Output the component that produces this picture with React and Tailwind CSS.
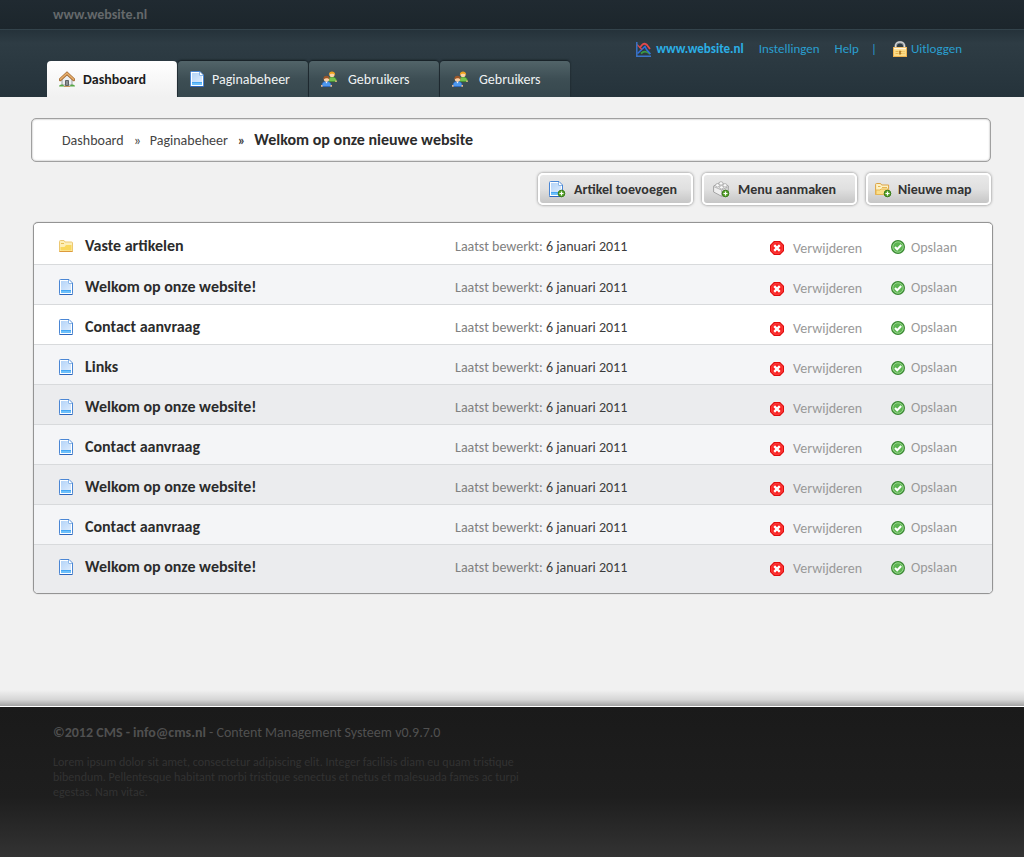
import React from "react";

const HouseIcon = () => (
    <svg className="h-4 w-4 shrink-0" viewBox="0 0 16 16" aria-hidden="true">
        <path d="M3 8v6h10V8L8 3.5z" fill="#eceff1" stroke="#9aa0a4" />
        <path d="M6.5 14.5V9.5h3v5z" fill="#8c8f93" stroke="#5d6266" />
        <path d="M1.3 8.6 8 2.4l6.7 6.2" fill="none" stroke="#a8713a" strokeWidth="3.2" strokeLinecap="round" />
        <path d="M1.5 8.2 8 2.2l6.5 6" fill="none" stroke="#e9b06d" strokeWidth="1.5" strokeLinecap="round" />
        <path d="M0 15.5c0-2.5 4.5-3 5.5 0zM10.5 15.5c1-3 5.5-2.5 5.5 0z" fill="#57a845" />
        <path d="M5 15.5h6" stroke="#c79a5c" />
    </svg>
);

const PlusBadge = () => (
    <g>
        <circle cx="12.5" cy="12.5" r="3.3" fill="#5aa52c" stroke="#357a18" />
        <path d="M12.5 10.5v4M10.5 12.5h4" stroke="#fff" strokeWidth="1.2" />
    </g>
);

const PageIcon = ({ plus }) => (
    <svg className={plus ? "h-[17px] w-[17px] shrink-0" : "h-4 w-[14px] shrink-0"} viewBox={plus ? "0 0 17 17" : "0 0 14 16"} aria-hidden="true">
        <defs>
            <linearGradient id="pageFill" x1="0" y1="0" x2="1" y2="1">
                <stop offset="0" stopColor="#b4d4f8" />
                <stop offset="1" stopColor="#dcebfd" />
            </linearGradient>
        </defs>
        <path d="M1.5.5H10L13.500 4v10.500a1 1 0 0 1-1 1h-11a1 1 0 0 1-1-1v-13a1 1 0 0 1 1-1z" fill="#fff" stroke="#4a86d4" />
        <path d="M2 2h7v3h3v6H2z" fill="url(#pageFill)" />
        <path d="M2 11h10v3H2z" fill="#6cc0fb" />
        <path d="M2 11h10v1H2z" fill="#45a6f2" />
        <path d="M9.5 1v3.500H13" fill="#fff" stroke="#8db8ea" />
        <path d="M.5 15.500h13" stroke="#2d66bd" />
        {plus && <PlusBadge />}
    </svg>
);

const UsersIcon = () => (
    <svg className="h-4 w-[19px] shrink-0" viewBox="0 0 19 16" aria-hidden="true">
        <path d="M7 10.500c0-3.500 1.500-4.500 4-4.500s4.500 1 4.500 4.500z" fill="#74c24d" stroke="#3f8f2c" strokeWidth=".7" />
        <path d="M15 9.500v1.500" stroke="#f0b98a" strokeWidth="1.5" />
        <circle cx="11" cy="3.5" r="2.6" fill="#fbd3a8" />
        <path d="M7.9 4C7.600-.8 14.400-.8 14.100 4 13 2.300 9.500 2.300 7.900 4z" fill="#f0a21c" />
        <path d="M.8 15.500c0-4 1.700-5 4.700-5s4.700 1 4.700 5z" fill="#4e98ee" stroke="#2a66c4" strokeWidth=".7" />
        <path d="M4.500 10.500h2l-1 2z" fill="#fff" />
        <path d="M.8 14v1.700M10.200 14v1.700" stroke="#f0b98a" strokeWidth="1.5" />
        <circle cx="5.5" cy="8" r="2.7" fill="#fbcfa6" />
        <path d="M2.300 8.700C1.800 3.500 9.200 3.500 8.700 8.700 7.500 6.700 4 6.700 2.300 8.700z" fill="#9b5527" />
    </svg>
);

const ChartIcon = () => (
    <svg className="h-[15px] w-[15px] shrink-0" viewBox="0 0 15 15" aria-hidden="true">
        <path d="M3.500 6 6 3C7.500 1.200 9.500 1.500 11 3l3 4" fill="none" stroke="#e3484a" strokeWidth="1.8" />
        <path d="M5 11.500c2.500-2.500 5.500-2.500 9 .5" fill="none" stroke="#3b9a45" strokeWidth="1.800" />
        <path d="M1.500 11.500 9 4.500l1.500 3L14.500 12" fill="none" stroke="#2f6fe0" strokeWidth="1.5" />
        <path d="M1 2.500 6 7.500" stroke="#d9484a" strokeWidth="1.3" />
        <path d="M.8 0v14.200H15" fill="none" stroke="#3a74c8" strokeWidth="1.5" />
    </svg>
);

const LockIcon = () => (
    <svg className="h-4 w-[14px] shrink-0" viewBox="0 0 14 16" aria-hidden="true">
        <path d="M2.700 8V5a4.300 3.800 0 0 1 8.600 0v3" fill="none" stroke="#8e9498" strokeWidth="2.6" />
        <path d="M2.500 8V5a4.500 4 0 0 1 9 0v3" fill="none" stroke="#d9dcde" strokeWidth="1.1" />
        <rect x=".5" y="6.5" width="13" height="9" fill="#fbdc88" stroke="#f0b34e" />
        <path d="M1 7.500h12" stroke="#fff6dc" strokeWidth="1.5" />
        <path d="M2.500 10.500h9M2.500 12.500h9" stroke="#e8b64e" strokeDasharray="3 1" />
        <path d="M7 9.800v3.700" stroke="#a06a1c" strokeWidth="1.5" />
    </svg>
);

const BrickIcon = () => (
    <svg className="h-[17px] w-[17px] shrink-0" viewBox="0 0 17 17" aria-hidden="true">
        <path d="M.6 5 7 1.500 15.500 5v7L9 15.500.6 11z" fill="#efefef" stroke="#a3a3a3" />
        <path d="M8.800 9.300v5.700l6.500-3.500V6z" fill="#cfcfcf" />
        <path d="M.6 5.500 8.500 9l7-3.500M8.500 9v6" fill="none" stroke="#b5b5b5" />
        <g fill="#f9f9f9" stroke="#a8a8a8" strokeWidth=".8">
            <ellipse cx="4.5" cy="4.3" rx="2" ry="1.7" />
            <ellipse cx="8" cy="2.4" rx="2" ry="1.7" />
            <ellipse cx="8.500" cy="6.300" rx="2" ry="1.7" />
            <ellipse cx="12" cy="4.300" rx="2" ry="1.7" />
        </g>
        <PlusBadge />
    </svg>
);

const FolderAddIcon = () => (
    <svg className="h-[17px] w-[17px] shrink-0" viewBox="0 0 17 17" aria-hidden="true">
        <path d="M.6 13.500v-10a1 1 0 0 1 1-1h4l1 1.500h7v9.500z" fill="#fdf1c4" stroke="#dca344" />
        <path d="M3 5.500h2.500M7 6.500h5" fill="none" stroke="#e6b652" />
        <path d="M1 13.500v-4.500h4l1-1h7.500v5.500z" fill="#fbdf8a" stroke="#e6b652" />
        <PlusBadge />
    </svg>
);

const FolderIcon = () => (
    <svg className="h-4 w-[14px] shrink-0" viewBox="0 0 14 16" aria-hidden="true">
        <path d="M.5 13.500v-10a1 1 0 0 1 1-1h3.500l1 1.500h6.500a1 1 0 0 1 1 1v8.500z" fill="#fdeeb6" stroke="#ecc873" />
        <path d="M1.500 12.500V9h4l1.500-2h5.500v5.500z" fill="#f9d75c" />
        <path d="M2 5.500h3" stroke="#e9bf55" />
        <path d="M.5 13.500h13" stroke="#dd9a3c" />
    </svg>
);

const DeleteIcon = () => (
    <svg className="h-[14px] w-[14px] shrink-0" viewBox="0 0 14 14" aria-hidden="true">
        <path d="M4.200.6h5.600l3.600 3.600v5.600l-3.600 3.600H4.200L.6 9.800V4.200z" fill="#fb1d1d" stroke="#e00d0d" strokeWidth="1.2" />
        <path d="M4.600 1.800h4.800l2.800 2.800v4.800l-2.800 2.800H4.600L1.800 9.400V4.600z" fill="none" stroke="#ff6a6a" strokeWidth=".6" />
        <path d="m4.200 4.200 5.600 5.600M9.800 4.200 4.200 9.800" stroke="#fff" strokeWidth="2.4" />
    </svg>
);

const SaveIcon = () => (
    <svg className="h-[14px] w-[14px] shrink-0" viewBox="0 0 14 14" aria-hidden="true">
        <circle cx="7" cy="7" r="6.4" fill="#5db552" stroke="#3c8a35" strokeWidth="1.2" />
        <circle cx="7" cy="7" r="5.2" fill="none" stroke="#a5dc9b" strokeWidth=".8" />
        <path d="m4 7 2.200 2.300L10.200 5" fill="none" stroke="#fff" strokeWidth="2" />
    </svg>
);

const tabs = [
    { name: "Dashboard", icon: <HouseIcon />, active: true },
    { name: "Paginabeheer", icon: <PageIcon /> },
    { name: "Gebruikers", icon: <UsersIcon /> },
    { name: "Gebruikers", icon: <UsersIcon /> },
];

const articles = [
    { title: "Vaste artikelen", folder: true, bg: "bg-white" },
    { title: "Welkom op onze website!", bg: "bg-[#f4f5f7]" },
    { title: "Contact aanvraag", bg: "bg-white" },
    { title: "Links", bg: "bg-[#f4f5f7]" },
    { title: "Welkom op onze website!", bg: "bg-[#ebecee]" },
    { title: "Contact aanvraag", bg: "bg-[#f4f5f7]" },
    { title: "Welkom op onze website!", bg: "bg-[#ebecee]" },
    { title: "Contact aanvraag", bg: "bg-[#f4f5f7]" },
    { title: "Welkom op onze website!", bg: "bg-[#ebecee]" },
];

const Tab = ({ name, icon, active }) => (
    <a
        href="#"
        className={
            active
                ? "flex h-9 w-[130px] items-center gap-2 rounded-t-[4px] bg-linear-to-b from-white to-[#f1f1f1] px-3 text-[14px] font-bold text-[#1c1c1c]"
                : "flex h-9 w-[130px] items-center gap-2 rounded-t-[4px] bg-linear-to-b from-[#526469] via-[#3d4e54] via-50% to-[#36474d] px-3 text-[14px] text-[#eef1f2] shadow-[0_-1px_2px_#131c21]"
        }
    >
        {icon}
        {name}
    </a>
);

const ToolButton = ({ icon, small, children }) => (
    <button
        type="button"
        className={`flex h-8 items-center rounded-[5px] border-2 border-white bg-linear-to-b from-[#e9e9e9] via-[#e0e0e0] to-[#c6c6c6] text-[14px] font-bold text-[#333] shadow-[0_0_3px_#777] ${small ? "w-[125px] gap-[6px] pl-[7px]" : "w-[155px] gap-2 pl-[9px]"}`}
    >
        {icon}
        {children}
    </button>
);

const App = () => {
    return (
        <div className="flex min-h-screen flex-col bg-[#f1f1f1] font-['Calibri','Carlito','Lato',sans-serif]">
            <header>
                <div className="flex h-[30px] items-center border-b border-[#33434b] bg-linear-to-b from-[#202a31] to-[#1c262c] pl-[53px]">
                    <span className="text-[14px] font-bold text-[#65696b]">www.website.nl</span>
                </div>
                <div className="flex h-[67px] justify-between overflow-hidden bg-linear-to-b from-[#25323a] via-[#2e3c44] via-20% to-[#25333b] pr-[62px] pl-[47px]">
                    <nav className="flex items-end gap-px">
                        {tabs.map((tab, i) => <Tab key={i} {...tab} />)}
                    </nav>
                    <div className="flex h-[38px] items-center text-[13px] text-[#2a9fd0]">
                        <ChartIcon />
                        <a href="#" className="ml-[5px] font-bold text-[#2bafe6]">www.website.nl</a>
                        <a href="#" className="ml-[15px]">Instellingen</a>
                        <a href="#" className="ml-[15px]">Help</a>
                        <span className="mx-3">|</span>
                        <a href="#" className="ml-1 flex items-center gap-1"><LockIcon />Uitloggen</a>
                    </div>
                </div>
            </header>

            <main className="flex-1 pt-[21px] pr-[31px] pl-[31px]">
                <nav className="mr-[2px] flex h-11 items-center rounded-[5px] border border-[#a0a0a0] bg-white pl-[30px] text-[14px] text-[#444] shadow-[inset_0_0_2px_#999]">
                    <a href="#">Dashboard</a>
                    <span className="mr-[9px] ml-[10px]">»</span>
                    <a href="#">Paginabeheer</a>
                    <span className="mr-[9px] ml-[10px] font-bold">»</span>
                    <span className="text-[16px] font-bold text-[#2c2c2c]">Welkom op onze nieuwe website</span>
                </nav>

                <div className="mt-[11px] mr-[2px] flex justify-end gap-[9px]">
                    <ToolButton icon={<PageIcon plus />}>Artikel toevoegen</ToolButton>
                    <ToolButton icon={<BrickIcon />}>Menu aanmaken</ToolButton>
                    <ToolButton icon={<FolderAddIcon />} small>Nieuwe map</ToolButton>
                </div>

                <div className="mt-[17px] ml-[2px] overflow-hidden rounded-[5px] border border-[#949494] bg-white pt-px shadow-[0_0_1px_#999]">
                    <table className="w-full table-fixed text-left text-[14px] text-[#999]">
                        <colgroup>
                            <col />
                            <col className="w-[315px]" />
                            <col className="w-[121px]" />
                            <col className="w-[101px]" />
                        </colgroup>
                        <tbody>
                            {articles.map(({ title, folder, bg }, i) => (
                                <tr key={i} className={`h-10 border-b border-[#d8dadc] align-top last:h-[49px] last:border-0 ${bg}`}>
                                    <td className="pt-3 pl-[25px]">
                                        <a href="#" className="flex h-5 items-center gap-3 text-[16px] font-bold text-[#2c2c2c]">
                                            {folder ? <FolderIcon /> : <PageIcon />}
                                            {title}
                                        </a>
                                    </td>
                                    <td className="pt-[13px] leading-5 text-[#808080]">
                                        Laatst bewerkt: <span className="text-[#3c3c3c]">6 januari 2011</span>
                                    </td>
                                    <td className="pt-[14px]">
                                        <button type="button" className="flex h-5 items-center gap-[9px]"><DeleteIcon />Verwijderen</button>
                                    </td>
                                    <td className="pt-[13px]">
                                        <button type="button" className="flex h-5 items-center gap-[6px]"><SaveIcon />Opslaan</button>
                                    </td>
                                </tr>
                            ))}
                        </tbody>
                    </table>
                </div>
            </main>

            <div className="h-4 bg-linear-to-b from-[#f1f1f1] via-[#d6d6d6] via-60% to-[#a2a2a2]" />
            <footer className="h-[151px] border-t border-white bg-linear-to-b from-[#1a1a1a] via-[#1e1e1e] via-60% to-[#333] pt-4 pl-[53px]">
                <p className="text-[14px] leading-5 text-[#505050]">
                    <b>©2012 CMS - info@cms.nl</b> - Content Management Systeem v0.9.7.0
                </p>
                <p className="mt-3 max-w-[480px] text-[12px] leading-[15px] text-[#323232]">
                    Lorem ipsum dolor sit amet, consectetur adipiscing elit. Integer facilisis diam eu quam tristique bibendum. Pellentesque habitant morbi tristique senectus et netus et malesuada fames ac turpi egestas. Nam vitae.
                </p>
            </footer>
        </div>
    );
};

export default App;
